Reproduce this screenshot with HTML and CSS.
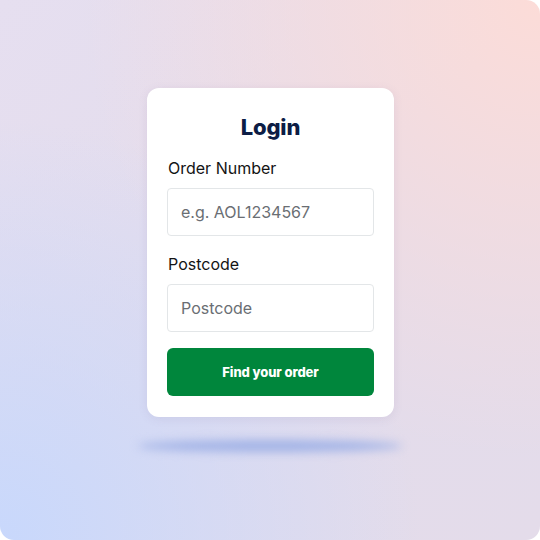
FILE: index.html
```html
<!DOCTYPE html>
<html>
<head>
<meta charset="utf-8">
<link rel="stylesheet" href="styles.css">
</head>
<body>
<div class="scene">
  <div class="stack">
    <form class="card">
      <h1 class="title">Login</h1>
      <label class="label">Order Number</label>
      <div class="input">e.g. AOL1234567</div>
      <label class="label label-second">Postcode</label>
      <div class="input">Postcode</div>
      <button type="button" class="btn">Find your order</button>
    </form>
    <div class="floor"></div>
  </div>
</div>
</body>
</html>
```

FILE: styles.css
```css
html, body {
  margin: 0;
  padding: 0;
  background: #ffffff;
}
.scene {
  width: 540px;
  height: 540px;
  border-radius: 0 14px 14px 14px;
  background:
    radial-gradient(circle at 0% 100%, #c8d8fc 0%, rgba(200,216,252,0) 55%),
    radial-gradient(circle at 100% 0%, #fcdcd8 0%, rgba(252,220,216,0) 60%),
    linear-gradient(135deg, #e6dff0 0%, #e3dcec 50%, #e4dcea 100%);
  display: flex;
  justify-content: center;
  padding-top: 88px;
  box-sizing: border-box;
  font-family: Inter, "Noto Sans", sans-serif;
}
.stack {
  display: flex;
  flex-direction: column;
  align-items: center;
}
.card {
  width: 247px;
  box-sizing: border-box;
  background: #fff;
  border-radius: 12px;
  padding: 24px 20px 21px 20px;
  box-shadow: 0 2px 10px rgba(120, 110, 160, 0.12);
  display: flex;
  flex-direction: column;
  margin-left: 1px;
}
.title {
  margin: 0 0 16px 0;
  text-align: center;
  font-family: Inter, sans-serif;
  font-weight: 800;
  font-size: 22px;
  line-height: 30px;
  color: #0d1d45;
  letter-spacing: -0.2px;
}
.label {
  font-size: 16px;
  line-height: 20px;
  color: #141414;
  margin-bottom: 10px;
  padding-left: 1px;
}
.label-second {
  margin-top: 18px;
}
.input {
  height: 48px;
  box-sizing: border-box;
  border: 1.5px solid #e3e6e8;
  border-radius: 4px;
  padding: 0 13px;
  display: flex;
  align-items: center;
  font-size: 16px;
  color: #6a6e73;
}
.btn {
  margin-top: 16px;
  height: 48px;
  border: none;
  border-radius: 6px;
  background: #00863c;
  color: #fff;
  font-family: Inter, sans-serif;
  font-weight: 800;
  font-size: 13px;
  letter-spacing: -0.1px;
  cursor: pointer;
}
.floor {
  margin-top: 23px;
  width: 264px;
  height: 12px;
  border-radius: 50%;
  background: #a2b3e6;
  filter: blur(5px);
}
```
